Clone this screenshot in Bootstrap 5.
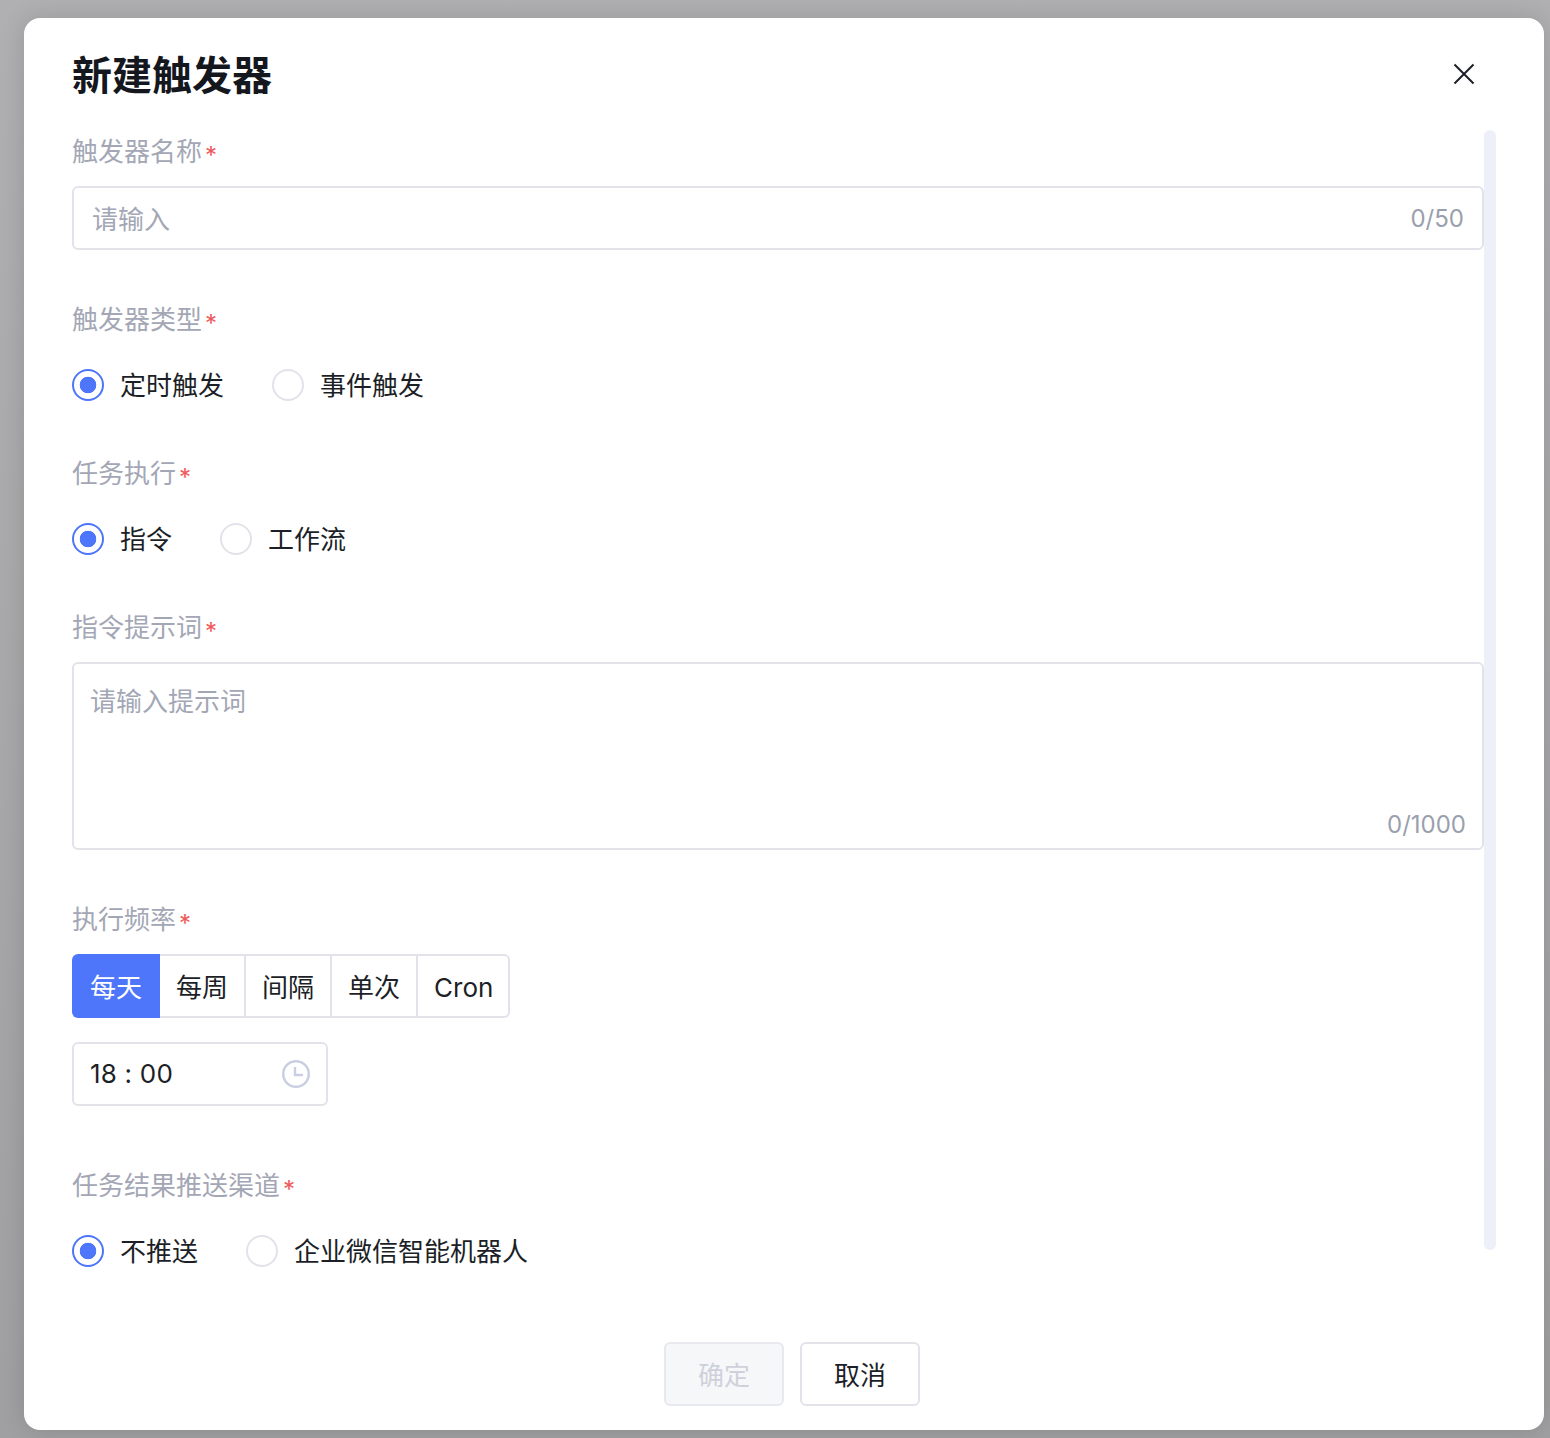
<!DOCTYPE html>
<html lang="zh-CN">
<head>
    <meta charset="UTF-8">
    <meta name="viewport" content="width=device-width, initial-scale=1">
    <title>新建触发器</title>
    <link href="https://cdn.jsdelivr.net/npm/bootstrap@5.3.2/dist/css/bootstrap.min.css" rel="stylesheet">
    <style>
        html, body { height: 100%; }
        body {
            background: linear-gradient(#b0b0b2, #a0a0a2);
            padding: 18px 6px 8px 24px;
            overflow: hidden;
            font-family: Inter, "Noto Sans CJK SC", sans-serif;
            font-size: 26px;
            color: #1c1f27;
        }
        .dlg {
            height: 1412px;
            background: #fff;
            border-radius: 16px;
            box-shadow: 0 0 24px rgba(0, 0, 0, .14);
        }
        .dlg-head { height: 112px; padding: 34px 60px 0 48px; }
        .dlg-title { font-size: 40px; line-height: 48px; font-weight: 700; color: #15171e; margin: 0; }
        .dlg-close { width: 40px; height: 40px; margin-top: 2px; border: 0; background: none; padding: 0; }
        .dlg-body { padding-left: 48px; min-height: 0; }
        .form-pane { width: 1412px; padding-top: 1px; }
        .scroll-track { width: 12px; height: 1120px; background: #edf0f8; border-radius: 6px; }

        .field { margin-bottom: 48px; }
        .field-gap { margin-bottom: 49px; }
        .field-time { margin-bottom: 59px; }
        .field-label { display: block; height: 40px; font-size: 26px; line-height: 41px; color: #a3a7b5; margin-bottom: 15px; }
        .field-label.tight { margin-bottom: 26px; }
        .req { color: #f0595a; font-size: 24px; line-height: 1; margin-left: 3px; position: relative; top: 3px; }

        .box { border: 2px solid #e2e3ea; border-radius: 6px; background: #fff; }
        .box .form-control {
            border: 0;
            box-shadow: none;
            background: transparent;
            font-size: 26px;
            color: #1c1f27;
            border-radius: 0;
        }
        .box .form-control::placeholder { color: #a3a7b5; opacity: 1; }
        .count { color: #9a9fae; font-size: 24px; line-height: 1; }
        .box-input { height: 64px; padding-right: 18px; }
        .box-input .count { padding-top: 2px; }
        .box-input .form-control { padding: 2px 0 0 18px; height: 60px; }
        .box-area { height: 188px; padding: 0 16px 11px 0; }
        .box-area .form-control { padding: 20px 0 0 16px; resize: none; line-height: 36px; }
        .box-time { width: 256px; height: 64px; padding-right: 16px; margin-top: 24px; }
        .box-time .form-control { padding: 0 0 2px 16px; height: 60px; letter-spacing: .2px; }

        .radio-row { height: 40px; gap: 48px; }
        .radio-row .form-check { gap: 16px; min-height: 0; }
        .radio-row .form-check-input {
            width: 32px;
            height: 32px;
            flex: none;
            border: 2px solid #e2e3ea;
            box-shadow: none;
            background-image: none;
        }
        .radio-row .form-check-input:checked {
            border-color: #4d76fb;
            background-color: #fff;
            background-image: radial-gradient(circle, #4d76fb 8px, transparent 8.6px);
        }
        .radio-row .form-check-label { line-height: 42px; height: 40px; }

        .freq .btn {
            height: 64px;
            padding: 0 16px;
            font-size: 26px;
            color: #1c1f27;
            background: #fff;
            border: 2px solid #e2e3ea;
            border-left: 0;
            border-radius: 0;
            margin-left: 0 !important;
            line-height: 64px;
        }
        .freq .btn:first-of-type { border-radius: 6px 0 0 6px; }
        .freq .btn:last-of-type { border-radius: 0 6px 6px 0; padding-right: 15px; }
        .freq .btn-check:checked + .btn {
            width: 88px;
            padding: 0 18px;
            background: #4d76fb;
            border-color: #4d76fb;
            border-width: 0;
            line-height: 68px;
            color: #fff;
        }

        .dlg-foot { gap: 16px; padding: 0 0 24px 16px; }
        .foot-btn {
            width: 120px;
            height: 64px;
            padding: 2px 0 0;
            font-size: 26px;
            color: #1c1f27;
            background: #fff;
            border: 2px solid #e2e3ea;
            border-radius: 6px;
        }
        .foot-btn:disabled { color: #ced1dc; background: #f6f7f9; border-color: #e8e9ef; opacity: 1; }
    </style>
</head>
<body>

<div class="dlg d-flex flex-column">
    <div class="dlg-head d-flex justify-content-between align-items-start flex-shrink-0">
        <h5 class="dlg-title">新建触发器</h5>
        <button type="button" class="dlg-close d-flex align-items-center justify-content-center" aria-label="关闭">
            <svg width="22" height="22" viewBox="0 0 22 22" fill="none" stroke="#1c1f27" stroke-width="2"><path d="M1.5 1.5 20.5 20.5M20.5 1.5 1.5 20.5"/></svg>
        </button>
    </div>

    <div class="dlg-body d-flex flex-grow-1 overflow-hidden">
        <form class="form-pane flex-shrink-0">
            <div class="field-gap">
                <label class="field-label">触发器名称<span class="req">*</span></label>
                <div class="box box-input d-flex align-items-center">
                    <input type="text" class="form-control flex-grow-1" placeholder="请输入">
                    <span class="count">0/50</span>
                </div>
            </div>

            <div class="field">
                <label class="field-label tight">触发器类型<span class="req">*</span></label>
                <div class="radio-row d-flex align-items-center">
                    <div class="form-check d-flex align-items-center p-0 m-0">
                        <input class="form-check-input m-0" type="radio" name="kind" id="kind1" checked>
                        <label class="form-check-label" for="kind1">定时触发</label>
                    </div>
                    <div class="form-check d-flex align-items-center p-0 m-0">
                        <input class="form-check-input m-0" type="radio" name="kind" id="kind2">
                        <label class="form-check-label" for="kind2">事件触发</label>
                    </div>
                </div>
            </div>

            <div class="field">
                <label class="field-label tight">任务执行<span class="req">*</span></label>
                <div class="radio-row d-flex align-items-center">
                    <div class="form-check d-flex align-items-center p-0 m-0">
                        <input class="form-check-input m-0" type="radio" name="task" id="task1" checked>
                        <label class="form-check-label" for="task1">指令</label>
                    </div>
                    <div class="form-check d-flex align-items-center p-0 m-0">
                        <input class="form-check-input m-0" type="radio" name="task" id="task2">
                        <label class="form-check-label" for="task2">工作流</label>
                    </div>
                </div>
            </div>

            <div class="field-gap">
                <label class="field-label">指令提示词<span class="req">*</span></label>
                <div class="box box-area d-flex flex-column">
                    <textarea class="form-control flex-grow-1" placeholder="请输入提示词"></textarea>
                    <span class="count text-end">0/1000</span>
                </div>
            </div>

            <div class="field-time">
                <label class="field-label">执行频率<span class="req">*</span></label>
                <div class="btn-group freq" role="group">
                    <input type="radio" class="btn-check" name="freq" id="freq1" checked>
                    <label class="btn" for="freq1">每天</label>
                    <input type="radio" class="btn-check" name="freq" id="freq2">
                    <label class="btn" for="freq2">每周</label>
                    <input type="radio" class="btn-check" name="freq" id="freq3">
                    <label class="btn" for="freq3">间隔</label>
                    <input type="radio" class="btn-check" name="freq" id="freq4">
                    <label class="btn" for="freq4">单次</label>
                    <input type="radio" class="btn-check" name="freq" id="freq5">
                    <label class="btn" for="freq5">Cron</label>
                </div>
                <div class="box box-time d-flex align-items-center">
                    <input type="text" class="form-control" value="18 : 00">
                    <svg class="flex-shrink-0" width="28" height="28" viewBox="0 0 28 28" fill="none" stroke="#c9cfe0" stroke-width="2.4"><circle cx="14" cy="14" r="12.8"/><path d="M13 7V15H21"/></svg>
                </div>
            </div>

            <div>
                <label class="field-label tight">任务结果推送渠道<span class="req">*</span></label>
                <div class="radio-row d-flex align-items-center">
                    <div class="form-check d-flex align-items-center p-0 m-0">
                        <input class="form-check-input m-0" type="radio" name="push" id="push1" checked>
                        <label class="form-check-label" for="push1">不推送</label>
                    </div>
                    <div class="form-check d-flex align-items-center p-0 m-0">
                        <input class="form-check-input m-0" type="radio" name="push" id="push2">
                        <label class="form-check-label" for="push2">企业微信智能机器人</label>
                    </div>
                </div>
            </div>
        </form>
        <div class="scroll-track flex-shrink-0"></div>
    </div>

    <div class="dlg-foot d-flex justify-content-center flex-shrink-0">
        <button type="button" class="btn foot-btn" disabled>确定</button>
        <button type="button" class="btn foot-btn">取消</button>
    </div>
</div>

<script src="https://cdn.jsdelivr.net/npm/bootstrap@5.3.2/dist/js/bootstrap.bundle.min.js"></script>
</body>
</html>
